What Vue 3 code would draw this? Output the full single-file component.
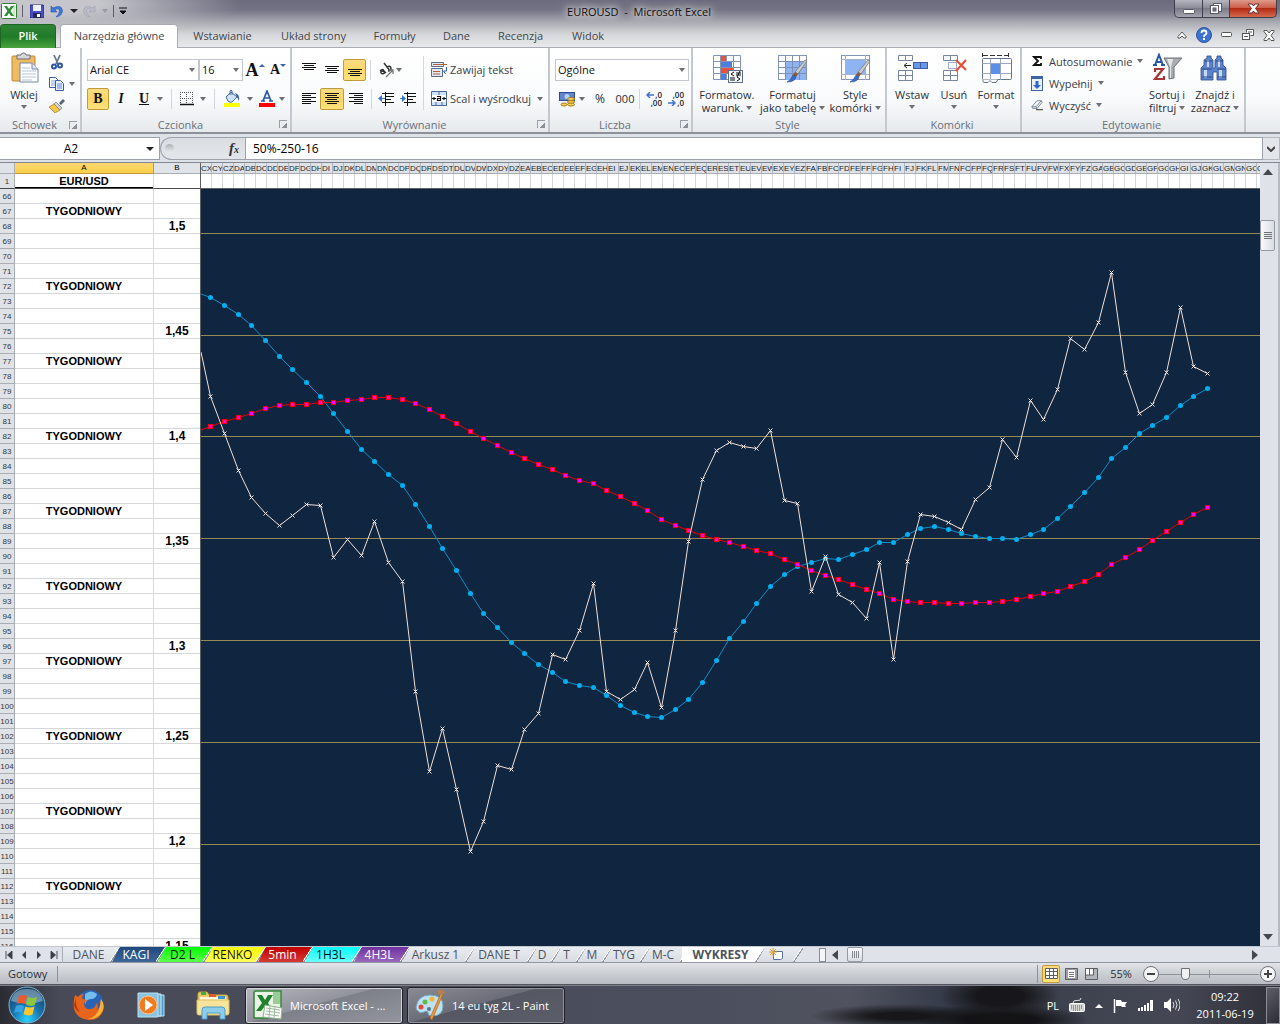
<script setup>
import { ref } from 'vue'

const ribbonTabs = [
  { name: 'Wstawianie', w: 89 },
  { name: 'Układ strony', w: 93 },
  { name: 'Formuły', w: 69 },
  { name: 'Dane', w: 55 },
  { name: 'Recenzja', w: 73 },
  { name: 'Widok', w: 62 },
]

// Column letters CX, CY, … in spreadsheet notation
function columnName(n) {
  let s = ''
  while (n > 0) {
    const r = (n - 1) % 26
    s = String.fromCharCode(65 + r) + s
    n = Math.floor((n - 1) / 26)
  }
  return s
}
const columns = Array.from({ length: 97 }, (_, i) => columnName(102 + i))

const levels = { 68: '1,5', 75: '1,45', 82: '1,4', 89: '1,35', 96: '1,3', 102: '1,25', 109: '1,2', 116: '1,15' }
const rows = Array.from({ length: 51 }, (_, i) => {
  const n = 66 + i
  return { n, a: n % 5 === 2 ? 'TYGODNIOWY' : '', b: levels[n] || '' }
})

// Chart series, y in window pixels
const slow = [
  426, 421, 417, 413, 408, 405, 404, 404, 402, 402, 400, 399, 397, 397, 399, 403, 409, 416, 423, 431, 438, 445, 452, 458,
  464, 469, 475, 480, 483, 490, 496, 503, 510, 519, 525, 530, 535, 539, 542, 546, 550, 553, 559, 564, 570, 575, 579, 584,
  589, 593, 599, 601, 602, 602, 603, 603, 602, 602, 601, 599, 596, 593, 591, 586, 581, 574, 564, 557, 549, 540, 531, 522,
  514, 507,
]
const fast = [
  297, 305, 314, 325, 340, 356, 369, 382, 396, 413, 431, 449, 461, 474, 485, 504, 526, 548, 570, 593, 613, 627, 642, 653,
  664, 672, 681, 685, 687, 695, 705, 712, 716, 717, 709, 699, 682, 660, 638, 621, 603, 586, 574, 566, 562, 558, 559, 554,
  549, 542, 542, 534, 528, 526, 529, 533, 536, 538, 538, 539, 534, 529, 518, 506, 492, 477, 458, 447, 433, 425, 417, 405,
  396, 388,
]
const price = [
  396, 433, 470, 497, 513, 525, 515, 504, 505, 557, 539, 555, 521, 562, 581, 691, 771, 728, 789, 851, 821, 765, 769, 729,
  713, 654, 659, 630, 583, 691, 699, 689, 662, 707, 630, 541, 479, 450, 442, 446, 448, 430, 500, 503, 591, 556, 594, 602,
  618, 562, 659, 561, 514, 516, 522, 529, 499, 487, 439, 457, 400, 419, 389, 338, 349, 322, 272, 372, 413, 404, 372, 307,
  366, 373,
]
const toPoints = (ys) => ys.map((y, i) => ({ x: Math.floor(9.88 + i * 13.652) + 0.5, y: y - 189 + 0.5 }))
const toLine = (pts, startY) => `0,${startY - 189} ` + pts.map((p) => `${p.x},${p.y}`).join(' ')
const slowPts = toPoints(slow)
const fastPts = toPoints(fast)
const pricePts = toPoints(price)
const gridLines = [233, 335, 436, 538, 640, 742, 844].map((y) => y - 189 + 0.5)

const sheets = [
  { name: 'DANE', w: 49, first: true },
  { name: 'KAGI', w: 46, bg: 'navy' },
  { name: 'D2 L', w: 47, bg: 'green' },
  { name: 'RENKO', w: 53, bg: 'yellow' },
  { name: '5min', w: 47, bg: 'red' },
  { name: '1H3L', w: 49, bg: 'cyan' },
  { name: '4H3L', w: 48, bg: 'violet' },
  { name: 'Arkusz 1', w: 65 },
  { name: 'DANE T', w: 62 },
  { name: 'D', w: 24 },
  { name: 'T', w: 25 },
  { name: 'M', w: 26 },
  { name: 'TYG', w: 38 },
  { name: 'M-C', w: 40 },
]

const formula = ref('50%-250-16')
const zoom = ref(55)
</script>

<template>
  <div class="window">
    <header class="top">
      <div class="titlebar">
        <div class="quick">
          <svg width="16" height="16" viewBox="0 0 16 16">
            <rect x=".5" y=".5" width="15" height="15" rx="1" fill="#fff" stroke="#2f7d32" />
            <path d="M12 2h2.500v12H12" fill="#cfe6c9" />
            <path d="M3 3h3l2 3 2-3h3l-3.500 5L13 13h-3L8 10l-2 3H3l3.500-5z" fill="#2e8b37" />
          </svg>
          <i class="vline"></i>
          <button aria-label="Zapisz">
            <svg width="14" height="14" viewBox="0 0 14 14">
              <path d="M0 1h13l1 1v12H1l-1-1z" fill="#4a4fc4" stroke="#2c2f86" />
              <rect x="3" y="1" width="8" height="6" fill="#eef2fb" />
              <rect x="3" y="9" width="8" height="5" fill="#23285e" />
              <rect x="7" y="10" width="3" height="3" fill="#fff" />
            </svg>
          </button>
          <button class="undo" aria-label="Cofnij">
            <svg width="14" height="14" viewBox="0 0 14 14">
              <path d="M1 2v6h6L5 6Q9 3 9.500 7q0 3-3.500 6 6-1 6.500-6Q12 0 3 4z" fill="#3f79d6" stroke="#2a56a6" stroke-width=".6" />
            </svg>
            <i class="caret dark"></i>
          </button>
          <button class="redo" aria-label="Ponów">
            <svg width="14" height="14" viewBox="0 0 14 14">
              <path d="M13 2v6H7l2-2Q5 3 4.500 7q0 3 3.500 6-6-1-6.500-6Q2 0 11 4z" fill="#b9bcc6" stroke="#9b9fab" stroke-width=".6" />
            </svg>
            <i class="caret light"></i>
          </button>
          <i class="vline"></i>
          <svg width="8" height="8" viewBox="0 0 8 8"><path d="M0 1h8M1 4h6L4 7z" stroke="#111" fill="#111" /></svg>
        </div>
        <h1>EUROUSD&nbsp; -&nbsp; Microsoft Excel</h1>
        <div class="winbtns">
          <button class="wb" aria-label="Minimalizuj">
            <svg width="27" height="16"><rect x="8.500" y="8.500" width="11" height="4" rx="1" fill="#fff" stroke="#555865" /></svg>
          </button>
          <button class="wb" aria-label="Przywróć">
            <svg width="26" height="16">
              <rect x="10.500" y="2.500" width="8" height="8" fill="#fff" stroke="#555865" />
              <rect x="7.500" y="4.500" width="8" height="8" fill="#fff" stroke="#555865" />
              <rect x="10" y="7" width="3" height="3" fill="#777b88" stroke="#555865" />
            </svg>
          </button>
          <button class="wb close" aria-label="Zamknij">
            <svg width="46" height="16"><path d="M18 3h4l1.500 2L25 3h4l-3.500 4.500L29 12h-4l-1.500-2-1.500 2h-4l3.500-4.500z" fill="#fff" stroke="#6b3030" /></svg>
          </button>
        </div>
      </div>
      <nav class="tabs">
        <button class="file">Plik</button>
        <button class="tab active">Narzędzia główne</button>
        <button v-for="t in ribbonTabs" :key="t.name" class="tab" :style="{ width: t.w + 'px' }">{{ t.name }}</button>
        <span class="spacer"></span>
        <div class="docbtns">
          <svg width="10" height="8" viewBox="0 0 10 8"><path d="M1 5.500L5 1l4 4.500V7H7L5 5 3 7H1z" fill="#fff" stroke="#555" /></svg>
          <svg width="16" height="16" viewBox="0 0 16 16">
            <circle cx="8" cy="8" r="7.500" fill="#3c74cf" stroke="#2b559d" />
            <path d="M5.500 6q0-2.500 2.500-2.500T10.500 6q0 1-1.300 1.800T8 10" fill="none" stroke="#fff" stroke-width="1.800" />
            <rect x="7" y="11" width="2" height="2" fill="#fff" />
          </svg>
          <svg width="12" height="6" viewBox="0 0 12 6"><rect x=".5" y=".5" width="10" height="4" rx="1" fill="#fff" stroke="#555" /></svg>
          <svg width="12" height="12" viewBox="0 0 12 12">
            <path d="M4.500 3.500v-3h7v6h-3M6 3h4" fill="#fff" stroke="#555" />
            <rect x=".5" y="4.500" width="7" height="6" fill="#fff" stroke="#555" /><path d="M2 7.500h4" stroke="#555" />
          </svg>
          <svg width="12" height="11" viewBox="0 0 12 11"><path d="M1 .5h3l2 2.500L8 .5h3v1L8 5.500l3 4v1H8L6 8l-2 2.500H1v-1l3-4-3-4z" fill="#fff" stroke="#555" /></svg>
        </div>
      </nav>
    </header>

    <section class="ribbon">
      <div class="group g-clip">
        <div class="body">
          <button class="big w48">
            <svg width="32" height="32" viewBox="0 0 32 32">
              <rect x="4" y="4" width="23" height="25" rx="1" fill="#eebb63" stroke="#b9873a" />
              <path d="M9 7V3h4q0-2 2.500-2T18 3h4v4z" fill="#d4d6d8" stroke="#6d6f72" />
              <path d="M12 11h12l6 6v13H12z" fill="#fff" stroke="#7487a3" />
              <path d="M24 11v6h6" fill="#dfe9f7" stroke="#7487a3" />
              <path d="M14 16h8M14 19h14M14 22h14M14 25h14M14 28h10" stroke="#b3c3da" />
            </svg>
            <span>Wklej</span>
            <i class="caret"></i>
          </button>
          <div class="stack clipstack">
            <button aria-label="Wytnij">
              <svg width="14" height="16" viewBox="0 0 14 16">
                <path d="M5 1l4 9M11 1L7 10" stroke="#6f7889" stroke-width="1.800" />
                <circle cx="5" cy="12.500" r="2" fill="none" stroke="#2c55a5" stroke-width="2" /><circle cx="11" cy="11.500" r="2" fill="none" stroke="#2c55a5" stroke-width="2" />
              </svg>
            </button>
            <button aria-label="Kopiuj">
              <svg width="16" height="14" viewBox="0 0 16 14">
                <path d="M.5.5h6l2 2v8h-8z" fill="#fff" stroke="#38609f" /><path d="M2 4h5M2 6h5M2 8h5" stroke="#7fa3dc" />
                <path d="M6.500 3.500h5l3 3v7h-8z" fill="#e7f0fc" stroke="#38609f" /><path d="M8 7h5M8 9h5M8 11h5" stroke="#5f8ad0" />
              </svg>
              <i class="caret"></i>
            </button>
            <button aria-label="Malarz formatów">
              <svg width="16" height="14" viewBox="0 0 16 14">
                <path d="M10 4l4-4 2 2-4 4z" fill="#59646f" /><path d="M7 3l6 6-2 2-6-6z" fill="#cfd3d8" stroke="#777" stroke-width=".7" />
                <path d="M5 5l6 6-5 3-6-6z" fill="#f1c84c" stroke="#9f7823" stroke-width=".7" />
              </svg>
            </button>
          </div>
        </div>
        <footer><span>Schowek</span><i class="launch"></i></footer>
      </div>

      <div class="group g-font">
        <div class="body col">
          <div class="line">
            <label class="combo w112"><select aria-label="Czcionka"><option>Arial CE</option></select><i class="caret"></i></label>
            <label class="combo w44"><select aria-label="Rozmiar"><option>16</option></select><i class="caret"></i></label>
            <button class="glyph grow-a">A<i class="tri up"></i></button>
            <button class="glyph shrink-a">A<i class="tri"></i></button>
          </div>
          <div class="line">
            <button class="glyph on">B</button>
            <button class="glyph w24 ital">I</button>
            <button class="glyph w22 under">U</button>
            <i class="caret"></i>
            <i class="sep m8"></i>
            <svg width="14" height="14" viewBox="0 0 14 14">
              <path d="M.5 0v12M6.500 0v12M12.500 0v12M0 .5h13M0 6.500h13" stroke="#555" stroke-dasharray="1 1" /><path d="M0 12.500h14" stroke="#111" stroke-width="1.500" />
            </svg>
            <i class="caret m6"></i>
            <i class="sep m8"></i>
            <svg width="18" height="17" viewBox="0 0 18 17">
              <path d="M3 7l5-5 6 5-5 5q-2 1-4-1z" fill="#cfe0f5" stroke="#4a6a99" /><path d="M7 5V1q1-2 2 0v4" fill="none" stroke="#4a6a99" />
              <path d="M12 3q5 1 4 8l-2-4z" fill="#2e5ca8" /><rect x="1" y="13" width="16" height="4" fill="#ff0" />
            </svg>
            <i class="caret m6"></i>
            <svg class="ml6" width="16" height="17" viewBox="0 0 16 17">
              <path d="M4 11L8 1l4 10M5 8h6M2 11h4M10 11h4" fill="none" stroke="#2f56a0" stroke-width="1.700" /><rect y="13" width="16" height="4" fill="#f00" />
            </svg>
            <i class="caret m4"></i>
          </div>
        </div>
        <footer><span>Czcionka</span><i class="launch"></i></footer>
      </div>

      <div class="group g-align">
        <div class="body">
          <div class="body col nopad">
            <div class="line">
              <button class="al high"><svg width="14" height="8"><path d="M0 .5h14M2 2.500h10M0 4.500h14M2 6.500h10" stroke="#111" /></svg></button>
              <button class="al"><svg width="14" height="8"><path d="M0 .5h14M2 2.500h10M0 4.500h14M2 6.500h10" stroke="#111" /></svg></button>
              <button class="al on low"><svg width="14" height="8"><path d="M0 .5h14M2 2.500h10M0 4.500h14M2 6.500h10" stroke="#111" /></svg></button>
              <i class="sep m4"></i>
              <svg class="ml8" width="17" height="16" viewBox="0 0 17 16">
                <path d="M1 9q3-3 4 0l2 2M5 9q-4 0-3 2 2 2 4-1M5 1l6 8M8 5q3-2 4 1 0 3-3 3" fill="none" stroke="#333" stroke-width="1.500" />
                <path d="M7 15l7-7M10 8h4v4" fill="none" stroke="#777" stroke-width="1.300" />
              </svg>
              <i class="caret"></i>
            </div>
            <div class="line">
              <button class="al"><svg width="14" height="12"><path d="M0 .5h14M0 2.500h9M0 4.500h14M0 6.500h9M0 8.500h14M0 10.500h9" stroke="#111" /></svg></button>
              <button class="al on wide"><svg width="14" height="12"><path d="M0 .5h14M2 2.500h10M0 4.500h14M2 6.500h10M0 8.500h14M2 10.500h10" stroke="#111" /></svg></button>
              <button class="al"><svg width="14" height="12"><path d="M0 .5h14M5 2.500h9M0 4.500h14M5 6.500h9M0 8.500h14M5 10.500h9" stroke="#111" /></svg></button>
              <i class="sep m4"></i>
              <svg class="ml6" width="16" height="14" viewBox="0 0 16 14">
                <path d="M4 1.500h12M8 4.500h8M8 7.500h5M4 10.500h12M7.500 0v14" stroke="#111" /><path d="M7 7H4v3L0 6.500 4 3v3h3" fill="#3b74cf" />
              </svg>
              <svg class="ml6" width="16" height="14" viewBox="0 0 16 14">
                <path d="M4 1.500h12M8 4.500h8M8 7.500h5M4 10.500h12M7.500 0v14" stroke="#111" /><path d="M0 6h2V3l4 3.500L2 10V7H0" fill="#3b74cf" />
              </svg>
            </div>
          </div>
          <i class="sep tall"></i>
          <div class="body col nopad">
            <button class="line text">
              <svg width="16" height="16" viewBox="0 0 16 16">
                <path d="M.5.500h12v4H.5zM.5 6.500h11v8H.5z" fill="#dfe9f6" stroke="#5b6d8a" /><path d="M2 2.500h14M2 9.500h7M2 12h7" stroke="#b9602c" /><path d="M15.500 5v4h-3l2 3" fill="none" stroke="#2b5fb5" />
              </svg>
              Zawijaj tekst
            </button>
            <button class="line text">
              <svg width="16" height="15" viewBox="0 0 16 15">
                <path d="M.5.500h15v14H.5zM0 4.500h16M0 10.500h16M8 0v4M5 11v4M11 11v4" fill="#cfe0f7" stroke="#4a6a99" /><rect x="1" y="4" width="14" height="7" fill="#fff" />
                <path d="M6 5.500h3.500v4H6.500v-2h3M1 7.500h4M11 7.500h4M3 6v3M13 6v3" fill="none" stroke="#111" stroke-width="1.200" />
              </svg>
              Scal i wyśrodkuj <i class="caret push"></i>
            </button>
          </div>
        </div>
        <footer><span>Wyrównanie</span><i class="launch"></i></footer>
      </div>

      <div class="group g-num">
        <div class="body col">
          <div class="line"><label class="combo w134"><select aria-label="Format liczb"><option>Ogólne</option></select><i class="caret"></i></label></div>
          <div class="line">
            <svg class="ml4" width="16" height="16" viewBox="0 0 16 16">
              <rect x=".5" y="1.500" width="15" height="8" fill="#5d86cf" stroke="#2b4e93" /><circle cx="8" cy="5.500" r="2.500" fill="#b9d0f2" />
              <ellipse cx="12" cy="8" rx="3.500" ry="1.500" fill="#f7cf5a" stroke="#a97b19" /><ellipse cx="12" cy="11" rx="3.500" ry="1.500" fill="#f7cf5a" stroke="#a97b19" /><ellipse cx="12" cy="13.500" rx="3.500" ry="1.500" fill="#f7cf5a" stroke="#a97b19" /><ellipse cx="5" cy="13.500" rx="3" ry="1.500" fill="#f7cf5a" stroke="#a97b19" />
            </svg>
            <i class="caret m4"></i>
            <button class="num pc">%</button>
            <button class="num th">000</button>
            <i class="sep"></i>
            <button class="dec" aria-label="Zwiększ dziesiętne">
              <span><svg width="8" height="6"><path d="M8 3H2M4 0L1 3l3 3" fill="none" stroke="#3b74cf" stroke-width="1.500" /></svg>,0</span>
              <span>,00</span>
            </button>
            <button class="dec" aria-label="Zmniejsz dziesiętne">
              <span>,00</span>
              <span><svg width="8" height="6"><path d="M0 3h6M4 0l3 3-3 3" fill="none" stroke="#3b74cf" stroke-width="1.500" /></svg>,0</span>
            </button>
          </div>
        </div>
        <footer><span>Liczba</span><i class="launch"></i></footer>
      </div>

      <div class="group g-style">
        <div class="body">
          <button class="big w66">
            <svg width="32" height="32" viewBox="0 0 32 32">
              <path d="M2.500 3.500h27v24h-27zM9.500 3v25M15.500 3v25M22.500 3v25M2 9.500h28M2 15.500h28M2 21.500h28" fill="#fff" stroke="#8494b5" />
              <rect x="10" y="4" width="5" height="5" fill="#e8503f" /><rect x="10" y="10" width="11" height="5" fill="#4a7fe0" /><rect x="10" y="16" width="12" height="5" fill="#e8503f" /><rect x="10" y="22" width="5" height="6" fill="#4a7fe0" />
              <rect x="17.500" y="18.500" width="14" height="12" fill="#f4f6fa" stroke="#5f6e8a" /><path d="M23 20l-3 2 3 2M19 26h5M19 28h5M25 21h5M25 23h5M29 19l-3 6M26 25l3 2-3 2" fill="none" stroke="#111" />
            </svg>
            <span>Formatow.</span><span>warunk. <i class="caret"></i></span>
          </button>
          <button class="big w66">
            <svg width="32" height="32" viewBox="0 0 32 32">
              <rect x="2.500" y="3.500" width="28" height="24" fill="#fff" stroke="#8494b5" /><path d="M10 10h20v18H10z" fill="#8fb4f4" />
              <path d="M9.500 3v25M16.500 3v25M23.500 3v25M2 9.500h28M2 15.500h28M2 21.500h28" stroke="#7c8fb5" />
              <path d="M31 9l-9 13-3-2L29 8z" fill="#c9cbcd" stroke="#6b6b6b" stroke-width=".7" /><path d="M19 20l3 2-2 3-3-2z" fill="#8a5a2c" /><path d="M17 23l3 2q-1 5-9 5 4-2 6-7z" fill="#3a6cc8" stroke="#274a8c" stroke-width=".6" />
            </svg>
            <span>Formatuj</span><span>jako tabelę <i class="caret"></i></span>
          </button>
          <button class="big w60">
            <svg width="32" height="32" viewBox="0 0 32 32">
              <rect x="2.500" y="3.500" width="28" height="24" fill="#fff" stroke="#8494b5" /><rect x="7" y="8" width="19" height="14" fill="#8fb4f4" />
              <path d="M6.500 3v25M26.500 3v25M2 7.500h28M2 22.500h28" stroke="#a4b1cb" />
              <path d="M31 9l-9 13-3-2L29 8z" fill="#c9cbcd" stroke="#6b6b6b" stroke-width=".7" /><path d="M19 20l3 2-2 3-3-2z" fill="#8a5a2c" /><path d="M17 23l3 2q-1 5-9 5 4-2 6-7z" fill="#3a6cc8" stroke="#274a8c" stroke-width=".6" />
            </svg>
            <span>Style</span><span>komórki <i class="caret"></i></span>
          </button>
        </div>
        <footer><span>Style</span></footer>
      </div>

      <div class="group g-cells">
        <div class="body">
          <button class="big w42">
            <svg width="32" height="32" viewBox="0 0 32 32">
              <path d="M2.500 3.500h14v5h-14zM9.500 3v6M2.500 18.500h14v10h-14zM9.500 18v10M2 23.500h15" fill="#fff" stroke="#7886a1" />
              <rect x="17.500" y="10.500" width="14" height="6" fill="#6a97ea" stroke="#3d5f9f" /><path d="M24.500 10v7" stroke="#3d5f9f" /><path d="M15 13.500H9M11 11l-3 2.500 3 2.500" fill="none" stroke="#222" />
            </svg>
            <span>Wstaw</span><i class="caret"></i>
          </button>
          <button class="big w42">
            <svg width="32" height="32" viewBox="0 0 32 32">
              <path d="M5.500 3.500h14v5h-14zM12.500 3v6M5.500 18.500h14v10h-14zM12.500 18v10M5 23.500h15" fill="#fff" stroke="#7886a1" />
              <rect x="10.500" y="10.500" width="8" height="6" fill="none" stroke="#3d5fa5" stroke-dasharray="1 1" /><path d="M18 8l10 10M28 8L18 19" stroke="#ee4b33" stroke-width="2" />
            </svg>
            <span>Usuń</span><i class="caret"></i>
          </button>
          <button class="big w42">
            <svg width="32" height="32" viewBox="0 0 32 32">
              <path d="M3 3.500h26" stroke="#333" stroke-dasharray="5 2" /><path d="M2.500 1v4M28.500 1v4" stroke="#333" />
              <rect x="2.500" y="6.500" width="29" height="21" rx="1" fill="#fff" stroke="#66758f" /><path d="M10.500 7v21M20.500 7v21M2 11.500h29M2 21.500h29" stroke="#9aa8c1" />
              <rect x="11" y="12" width="9" height="10" fill="#5c8fe8" /><path d="M3 27.500v2q0 1 2 1h3l2-2 2 2h4l2-3" fill="#fff" stroke="#66758f" />
            </svg>
            <span>Format</span><i class="caret"></i>
          </button>
        </div>
        <footer><span>Komórki</span></footer>
      </div>

      <div class="group g-edit">
        <div class="body">
          <div class="stack edit">
            <button class="text">
              <svg width="12" height="12" viewBox="0 0 12 12"><path d="M10 4V2H3l4 4-4 4h7V8" fill="none" stroke="#111" stroke-width="1.800" /></svg>
              Autosumowanie <i class="caret"></i>
            </button>
            <button class="text">
              <svg width="12" height="15" viewBox="0 0 12 15"><rect x=".5" y=".5" width="11" height="14" fill="#eaf1fb" stroke="#3e64a4" /><path d="M.5 2h11" stroke="#3e64a4" stroke-width="2" /><path d="M4.500 5h3v4h2.500L6 13 2 9h2.500z" fill="#2c66cc" /></svg>
              Wypełnij <i class="caret"></i>
            </button>
            <button class="text">
              <svg width="12" height="12" viewBox="0 0 14 12"><path d="M1 8l6-7h5l1 2-6 7H2z" fill="#f3f5f9" stroke="#6d7a92" /><path d="M1 8l5 0 6-7M6 8l1 3" fill="none" stroke="#6d7a92" /><path d="M6 11.500h8" stroke="#111" /></svg>
              Wyczyść <i class="caret"></i>
            </button>
          </div>
          <button class="big w48">
            <svg width="32" height="32" viewBox="0 0 32 32">
              <path d="M13 6h18l-8 9v11l-5 1V15z" fill="#a9adb2" stroke="#6d7074" /><path d="M16 7h6l-2 8v11h-1V15z" fill="#e4e6e8" />
              <path d="M4 13L8 3l4 10M5 10h6M2 13h4M10 13h4" fill="none" stroke="#2c55a5" stroke-width="2" />
              <path d="M4 20v-3h8L4 27h9v-3" fill="none" stroke="#a33636" stroke-width="2.200" />
            </svg>
            <span>Sortuj i</span><span>filtruj <i class="caret"></i></span>
          </button>
          <button class="big w48">
            <svg width="32" height="32" viewBox="0 0 32 32">
              <path d="M8 4h4v2l2 2v8h2V8l2-2V4h4v2l2 2v5l3 3v12h-9v-8h-4v8H2V16l3-3V8l3-2z" fill="#5b84cc" stroke="#2c4a85" stroke-width=".8" />
              <path d="M8 8h2v7H8zM19 8h2v7h-2zM5 18h3v8H5zM20 18h3v8h-3z" fill="#c6d8f5" /><path d="M3 17h10M18 17h9M3 25h10M18 25h9M6 9h7M17 9h7" stroke="#2c4a85" />
            </svg>
            <span>Znajdź i</span><span>zaznacz <i class="caret"></i></span>
          </button>
        </div>
        <footer><span>Edytowanie</span></footer>
      </div>
    </section>

    <section class="formulabar">
      <div class="namebox"><input aria-label="Pole nazwy" value="A2" /><i class="caret dark"></i></div>
      <div class="fx">
        <i class="knob"></i>
        <span class="fxlabel">f<small>x</small></span>
      </div>
      <input v-model="formula" class="formula" aria-label="Pasek formuły" />
      <button class="expand" aria-label="Rozwiń"><svg width="8" height="6"><path d="M0 1l4 4 4-4" fill="none" stroke="#444" stroke-width="2" /></svg></button>
    </section>

    <main class="grid">
      <table class="cells">
        <thead>
          <tr class="letters"><th class="rn"></th><th class="ca sel">A</th><th class="cb">B</th></tr>
        </thead>
        <tbody>
          <tr class="frozen"><th class="rn">1</th><td class="ca">EUR/USD</td><td class="cb"></td></tr>
          <tr v-for="r in rows" :key="r.n"><th class="rn">{{ r.n }}</th><td class="ca">{{ r.a }}</td><td class="cb">{{ r.b }}</td></tr>
        </tbody>
      </table>
      <div class="right">
        <div class="strip heads"><span v-for="c in columns" :key="c">{{ c }}</span></div>
        <div class="strip blanks"><span v-for="c in columns" :key="c"></span></div>
        <svg class="chart" width="100%" height="100%">
          <line v-for="y in gridLines" :key="y" x1="0" x2="100%" :y1="y" :y2="y" stroke="#938953" />
          <polyline :points="toLine(fastPts, 294)" class="fast" />
          <circle v-for="(p, i) in fastPts" :key="i" :cx="p.x" :cy="p.y" r="2.500" fill="#00b0f0" />
          <polyline :points="toLine(slowPts, 430)" class="slow" />
          <g v-for="(p, i) in slowPts" :key="i">
            <rect :x="p.x - 2.5" :y="p.y - 2.5" width="5" height="5" fill="#f00" />
            <rect :x="p.x - 1.5" :y="p.y - 1.5" width="3" height="3" fill="#f0f" />
          </g>
          <polyline :points="toLine(pricePts, 352)" class="price" />
          <path v-for="(p, i) in pricePts" :key="i" :d="`M${p.x - 2} ${p.y - 2}l4 4m0 -4l-4 4`" class="price" />
        </svg>
      </div>
      <div class="vscroll">
        <svg width="10" height="6"><path d="M0 6l5-6 5 6z" fill="#45484d" /></svg>
        <div class="vthumb"><i></i><i></i><i></i><i></i></div>
        <span class="spacer"></span>
        <svg class="down" width="10" height="6"><path d="M0 0l5 6 5-6z" fill="#45484d" /></svg>
      </div>
    </main>

    <nav class="sheetbar">
      <div class="nav">
        <svg width="8" height="8"><path d="M1 0v8M7 0L2.500 4 7 8z" stroke="#3a3f4a" fill="#3a3f4a" stroke-width=".9" /></svg>
        <svg width="8" height="8"><path d="M6 0L2 4l4 4z" fill="#3a3f4a" /></svg>
        <svg width="8" height="8"><path d="M2 0l4 4-4 4z" fill="#3a3f4a" /></svg>
        <svg width="8" height="8"><path d="M7 0v8M1 0l4.500 4L1 8z" stroke="#3a3f4a" fill="#3a3f4a" stroke-width=".9" /></svg>
      </div>
      <button v-for="s in sheets" :key="s.name" class="sheet" :class="[s.bg, { first: s.first }]" :style="{ width: s.w + 'px' }"><span>{{ s.name }}</span></button>
      <button class="sheet current"><span>WYKRESY</span></button>
      <button class="sheet add" aria-label="Wstaw arkusz">
        <span><svg width="16" height="13" viewBox="0 0 16 13"><path d="M4.500 3.500h9v7l-2 1h-7z" fill="#fff" stroke="#56709f" /><path d="M4 0v8M0 4h8M1 1l6 6M7 1L1 7" stroke="#e39a2e" /></svg></span>
      </button>
      <span class="gap"></span>
      <i class="split"></i>
      <svg class="left" width="6" height="10"><path d="M6 0L0 5l6 5z" fill="#45484d" /></svg>
      <div class="hthumb"><i></i><i></i><i></i><i></i></div>
      <span class="spacer"></span>
      <svg width="6" height="10"><path d="M0 0l6 5-6 5z" fill="#45484d" /></svg>
      <i class="corner"></i>
    </nav>

    <footer class="status">
      <span class="ready">Gotowy</span>
      <span class="spacer"></span>
      <div class="views">
        <button class="on" aria-label="Normalny"><svg width="13" height="11"><path d="M.5.500h12v10H.5zM4.500 0v11M8.500 0v11M0 3.500h13M0 7.500h13" fill="#fff" stroke="#5f6065" /></svg></button>
        <button aria-label="Układ strony"><svg width="13" height="12"><path d="M.5.500h12v11H.5z" fill="#9a9da3" stroke="#5f6065" /><rect x="3" y="2" width="7" height="8" fill="#fff" /><path d="M4 4.500h5M4 6.500h5M4 8.500h5" stroke="#777" /></svg></button>
        <button aria-label="Podgląd podziału stron"><svg width="13" height="12"><path d="M.5.500h12v11H.5z" fill="#b2b5ba" stroke="#5f6065" /><path d="M1 1h3v6H1zM5 1h3v6H5z" fill="#fff" /><path d="M4.500 0v7M8.500 0v7H0" fill="none" stroke="#5f6065" /></svg></button>
      </div>
      <span class="pct">{{ zoom }}%</span>
      <button class="round" aria-label="Pomniejsz"><svg width="16" height="16"><circle cx="8" cy="8" r="7.500" fill="#f4f5f6" stroke="#6d7077" /><path d="M4 8h8" stroke="#444" stroke-width="2" /></svg></button>
      <input v-model="zoom" class="slider" type="range" min="10" max="192" aria-label="Powiększenie" />
      <button class="round" aria-label="Powiększ"><svg width="16" height="16"><circle cx="8" cy="8" r="7.500" fill="#f4f5f6" stroke="#6d7077" /><path d="M4 8h8M8 4v8" stroke="#444" stroke-width="2" /></svg></button>
    </footer>

    <footer class="taskbar">
      <svg class="orb" width="38" height="38" viewBox="0 0 38 38">
        <defs>
          <radialGradient id="orb" cx="50%" cy="90%" r="90%"><stop offset="0" stop-color="#27d3ff" /><stop offset=".45" stop-color="#1a73ae" /><stop offset="1" stop-color="#123a5e" /></radialGradient>
        </defs>
        <circle cx="19" cy="19" r="18" fill="url(#orb)" stroke="#86b4cf" />
        <path d="M3 15Q5 3 19 3t16 12Q19 20 3 15z" fill="#fff" opacity=".35" />
        <path d="M11 10q4-2 8 0l-2 8q-4-2-8 0z" fill="#f0592a" /><path d="M20 11q4 2 9 0l-2 8q-5 2-9-.5z" fill="#8cc63e" />
        <path d="M8 20q4-2 8 0l-2 7q-4-2-8 0z" fill="#34a4e4" /><path d="M17.500 20.500q4 2 9 0l-2 8q-5 2-9-.5z" fill="#fdc82f" />
      </svg>
      <svg class="ff" width="32" height="32" viewBox="0 0 32 32">
        <circle cx="17" cy="14" r="13" fill="#2a62b4" /><path d="M12 5q6-5 12 0-1 5-6 5t-6 6z" fill="#74bdec" />
        <path d="M2 6l3 2q2-3 6-3-3 3-1 5l4 1-3 3q0 7 7 6 5-1 5-6 3 2 1 7 4-3 3-10 4 5 3 11-3 9-14 9Q4 30 1 20 0 12 2 6z" fill="#e8641b" />
        <path d="M28 10q5 7 1 13-5 8-14 7 12-2 13-20z" fill="#f9b233" /><path d="M3 9q-1 9 4 14-5-2-6-7z" fill="#b8330f" />
      </svg>
      <svg class="wmp" width="28" height="28" viewBox="0 0 28 28">
        <path d="M9 4h18v21H9z" fill="#4f9bc9" stroke="#bfe2f3" /><path d="M5 3h19v22H5z" fill="#6cb2da" stroke="#cdeaf7" /><path d="M1 2h20v24H1z" fill="#8ac4e2" stroke="#b9e0f2" />
        <circle cx="11" cy="14" r="9" fill="#f27a1f" stroke="#ffc58b" /><path d="M8 8l8 6-8 6z" fill="#fff" />
      </svg>
      <svg class="exp" width="34" height="32" viewBox="0 0 34 32">
        <path d="M2 5q0-2 2-2h7l2 3h17q2 0 2 2v17H2z" fill="#eccb69" stroke="#c9a23e" /><path d="M4 8h26v3H4z" fill="#fff7d5" /><path d="M5 3h5v3H5z" fill="#3fae49" /><path d="M13 5h7v3h-7z" fill="#e05a30" /><path d="M22 7h7v3h-7z" fill="#3a97d3" />
        <path d="M1 11h32v13q0 2-2 2H3q-2 0-2-2z" fill="#f7e49a" stroke="#dcbf62" />
        <path d="M6 30v-9q0-3 3-3h17q3 0 3 3v9h-5v-6H11v6z" fill="#8fcdec" stroke="#4b9cc7" />
      </svg>
      <button class="task active">
        <svg width="32" height="32" viewBox="0 0 32 32">
          <path d="M2 4q0-2 2-2h25v18L15 29H2z" fill="#e9f4e6" stroke="#2b8535" stroke-width="1.500" /><path d="M21 3h7v12h-7z" fill="#9ccc95" />
          <path d="M5 6h5l3 5 3-5h5l-5 8 5 8h-5l-3-5-4 5H4l6-8z" fill="#22812d" />
          <path d="M13 16l17 3-1 11-18-2z" fill="#fff" stroke="#8bb287" /><path d="M14 19l14 2M14 22l14 2M13 25l14 2M18 17l-1 11M23 18l-1 11" stroke="#9ab99a" />
        </svg>
        <span>Microsoft Excel - ...</span>
      </button>
      <button class="task">
        <svg width="32" height="32" viewBox="0 0 32 32">
          <path d="M2 18Q4 6 16 6q13 0 13 11 0 10-11 10-4 0-4-3t-4-1-6-1 q-2-1-2-4z" fill="#bfe0f1" stroke="#6ca7c5" />
          <circle cx="7" cy="18" r="2.500" fill="#e4483a" /><circle cx="11" cy="13" r="2.500" fill="#5dbb46" /><circle cx="18" cy="10" r="2.500" fill="#f3b52f" /><circle cx="15" cy="20" r="2" fill="#4c7893" />
          <path d="M27 4l2 1-11 26-2-2z" fill="#ef9637" stroke="#a75d17" stroke-width=".6" /><path d="M24 1q5-1 7 3l-3 2-4-1z" fill="#b78052" />
        </svg>
        <span>14 eu tyg 2L - Paint</span>
      </button>
      <span class="spacer"></span>
      <div class="tray">
        <span class="lang">PL</span>
        <svg width="16" height="15" viewBox="0 0 16 15"><path d="M4 5q0-3 4-2.500T12 0" fill="none" stroke="#ddd" /><rect x=".5" y="5.500" width="15" height="8" rx="1" fill="#d7d7d7" stroke="#fff" /><path d="M2 8h12M2 10h12M4 12h8" stroke="#555" stroke-dasharray="1 1" /></svg>
        <svg width="8" height="5"><path d="M0 5l4-4 4 4z" fill="#fff" /></svg>
        <svg width="15" height="15" viewBox="0 0 15 15"><path d="M1.500 1v14" stroke="#fff" stroke-width="1.500" /><path d="M3 2h5l1 2h5l-2 3 1 2H9L8 8H3z" fill="#fff" /></svg>
        <svg width="16" height="12" viewBox="0 0 16 12"><path d="M0 9h2v3H0zM3 8h2v4H3zM6 6h2v6H6zM9 4h2v8H9zM12 1h3v11h-3z" fill="#fff" /></svg>
        <svg width="16" height="14" viewBox="0 0 16 14"><path d="M0 4h3l4-4v14l-4-4H0z" fill="#fff" /><path d="M9 4q2 3 0 6M11.500 2.500q3 4.500 0 9M14 1q4 6 0 12" fill="none" stroke="#ddd" /></svg>
      </div>
      <div class="clock"><span>09:22</span><span>2011-06-19</span></div>
      <i class="desk"></i>
    </footer>
  </div>
</template>

<style>
body { background: #cfd4db; }
</style>

<style scoped>
* { box-sizing: border-box; }
.window { height: 100vh; min-width: 1280px; display: flex; flex-direction: column; overflow: hidden; font: 11px/13px "Open Sans", "Noto Sans", sans-serif; color: #2b2f36; background: #d5dae2; }
button { border: 0; padding: 0; margin: 0; background: none; font: inherit; color: inherit; }
svg { display: block; flex: none; }
i { flex: none; font-style: normal; }
.spacer { flex: 1; }
.caret { display: inline-block; width: 0; height: 0; border: 3px solid transparent; border-top: 4px solid #6c6f75; border-bottom: 0; vertical-align: 2px; }
.caret.dark { border-width: 4px 4px 0; border-top-color: #222; }
.caret.light { border-top-color: #9799a3; }

.top { height: 48px; flex: none; background: radial-gradient(ellipse 200px 36px at 40px 4px, #c5c5cb 30%, transparent), linear-gradient(#6b6b7e 0, #747485 10px, #a9a9b2 22px, #d5d6d9 34px, #e9ebeb 48px); border-bottom: 1px solid #a9adb3; }
.titlebar { display: flex; height: 24px; align-items: flex-start; }
.quick { flex: 1 1 0; display: flex; align-items: center; height: 22px; padding-left: 1px; gap: 4px; }
.quick button { display: flex; align-items: center; gap: 6px; }
.quick > button:first-of-type { margin: 0 2px; }
.vline { width: 1px; height: 12px; background: #5d5d66; margin: 0 1px; }
h1 { margin: 0; font-size: 11px; line-height: 24px; font-weight: 400; color: #111; text-shadow: 0 0 6px #fff, 0 0 8px #ddd, 0 0 12px #ccc; }
.winbtns { flex: 1 1 0; display: flex; justify-content: flex-end; padding-right: 3px; }
.wb { height: 18px; border: 1px solid #3f3f4c; border-top: 0; background: linear-gradient(#b5b5c0, #8d8d9a 45%, #7a7a88 50%, #a5a5b0); margin-left: -1px; }
.wb:first-child { border-radius: 0 0 0 5px; }
.wb.close { border-radius: 0 0 5px 0; background: linear-gradient(#dd9a8b, #cc5e4a 45%, #b42b14 50%, #d46a4e); }
.tabs { display: flex; height: 24px; }
.file { width: 56px; color: #fff; font-weight: 600; background: linear-gradient(#2f8436, #1f7a28 50%, #49a33d); border: 1px solid #1c6522; border-bottom: 0; border-radius: 4px 4px 0 0; margin-right: 4px; padding-bottom: 2px; }
.tab { color: #43474d; line-height: 24px; }
.tab.active { width: 118px; background: #fff; border: 1px solid #a9adb3; border-bottom: 0; border-radius: 4px 4px 0 0; line-height: 21px; padding-bottom: 2px; }
.docbtns { display: flex; align-items: center; gap: 9px; padding: 0 5px 2px 0; }

.ribbon { display: flex; flex: none; height: 86px; background: linear-gradient(#fff, #fafbfc 60%, #e6e9ed); border-bottom: 2px solid #8d929a; }
.group { display: flex; flex-direction: column; border-right: 2px solid #c3c8cf; }
.g-clip { width: 82px; } .g-font { width: 210px; } .g-align { width: 258px; } .g-num { width: 143px; }
.g-style { width: 194px; } .g-cells { width: 135px; } .g-edit { width: 224px; }
.group > .body { flex: 1; }
.body { display: flex; }
.body.col { flex-direction: column; gap: 6px; padding: 10px 0 0 5px; }
.body.col.nopad { padding-left: 0; }
.g-align > .body { padding-left: 5px; }
.group > footer { display: flex; align-items: center; height: 16px; color: #6a7079; padding-right: 3px; }
.group > footer span { flex: 1; text-align: center; }
.launch { width: 8px; height: 8px; border: solid #9a9ea6; border-width: 1px 0 0 1px; background: linear-gradient(135deg, transparent 60%, #8b8f97 60%); }
.line { display: flex; align-items: center; height: 23px; }
.big { display: flex; flex-direction: column; align-items: center; padding-top: 4px; white-space: nowrap; height: 68px; }
.big svg { margin-bottom: 4px; }
.big > .caret { margin-top: 4px; }
.w48 { width: 48px; } .w66 { width: 66px; } .w60 { width: 60px; } .w42 { width: 42px; }
.g-style .body { padding-left: 1px; }
.g-cells .body { padding-left: 4px; }
.stack { display: flex; flex-direction: column; }
.clipstack { padding: 3px 0 0 1px; }
.clipstack button { display: flex; align-items: center; gap: 4px; height: 22px; }
.text { gap: 3px; color: #3b4048; }
.push { margin-left: 3px; }
.edit { width: 121px; padding: 2px 0 0 9px; }
.edit .text { display: flex; align-items: center; height: 22px; gap: 5px; }
.edit .text svg { margin-right: 1px; }
.combo { display: grid; align-items: center; height: 22px; }
.combo select { grid-area: 1 / 1; appearance: none; width: 100%; height: 22px; border: 1px solid #c3c7cd; border-radius: 0; background: #fff; font: 11px/18px "Open Sans", sans-serif; color: #111; padding: 0 2px; }
.combo .caret { grid-area: 1 / 1; justify-self: end; margin-right: 4px; }
.w112 { width: 112px; } .w44 { width: 44px; } .w134 { width: 134px; }
.glyph { display: flex; align-items: center; justify-content: center; font: bold 14px/20px "Liberation Serif", serif; color: #111; height: 22px; width: 22px; }
.glyph.w24 { width: 24px; } .glyph.w22 { width: 22px; margin-right: 2px; }
.glyph.ital { font-style: italic; } .under { text-decoration: underline; }
.glyph.grow-a { font-size: 18px; width: 24px; } .shrink-a { font-size: 14px; }
.tri { border: 3px solid transparent; border-top: 3px solid #3b62ae; border-bottom: 0; align-self: flex-start; margin-top: 5px; }
.tri.up { border-top: 0; border-bottom: 3px solid #3b62ae; }
.on { border: 1px solid #c29a37; border-radius: 2px; background: linear-gradient(#fbdc85, #fdd664 50%, #ffe27d); }
.sep { width: 1px; height: 20px; background: #d3d6db; }
.m8 { margin: 0 8px; } .m6 { margin-left: 6px; } .m4 { margin-left: 4px; } .ml8 { margin-left: 8px; } .ml6 { margin-left: 6px; } .ml4 { margin-left: 4px; }
.al { display: flex; justify-content: center; align-items: center; width: 23px; height: 22px; }
.al.high { padding-bottom: 6px; }
.al.low { align-items: flex-end; padding-bottom: 3px; }
.al.wide { width: 24px; }
.sep.tall { height: 54px; margin: 8px 7px 0 auto; }
.g-align > .body > .body.col:last-child { width: 117px; }
.num { text-align: center; font-size: 11px; } .num.pc { width: 30px; font-size: 12px; } .num.th { width: 20px; margin-right: 4px; }
.dec { display: flex; flex-direction: column; align-items: flex-end; width: 22px; font: 600 8px/8px "Open Sans", sans-serif; color: #222; }
.dec span { display: flex; align-items: center; gap: 1px; }

.formulabar { display: flex; flex: none; height: 28px; padding: 3px 0 2px; background: #dde2e9; }
.namebox { display: flex; align-items: center; width: 160px; background: #fff; border: 1px solid #9da2aa; border-left: 0; }
.namebox input { width: 142px; border: 0; background: none; text-align: center; font: 12px/20px "Open Sans", sans-serif; }
.namebox .caret { margin-left: 4px; }
.fx { display: flex; align-items: center; justify-content: space-between; width: 85px; padding: 0 6px 0 4px; border: 1px solid #9da2aa; border-right: 0; border-radius: 12px 0 0 12px; background: linear-gradient(#d9dce1, #e3e6ea); }
.knob { width: 9px; height: 9px; border-radius: 50%; background: linear-gradient(#aeb1b6, #eceef0); }
.fxlabel { font: italic bold 15px/18px "Liberation Serif", serif; color: #333; }
.fxlabel small { font-size: 10px; }
.formula { flex: 1; min-width: 0; border: 1px solid #9da2aa; padding: 0 7px; font: 12px/20px "Open Sans", sans-serif; background: #fff; }
.expand { display: flex; align-items: center; justify-content: center; width: 17px; border: 1px solid #b5b9c0; border-left: 0; background: #e3e6ea; }

.grid { display: flex; flex: 1; min-height: 0; overflow: hidden; border-top: 1px solid #82868e; background: #fff; }
.cells { width: 201px; flex: none; align-self: flex-start; table-layout: fixed; border-collapse: separate; border-spacing: 0; font: bold 12px/14px "Liberation Sans", sans-serif; color: #000; border-right: 1px solid #5e5e5e; }
.cells th, .cells td { padding: 0; height: 15px; text-align: center; border: solid #d5d7da; border-width: 0 1px 1px 0; }
.cells td { font-size: 12px; line-height: 13px; padding-top: 1px; }
.cells td.ca { font-size: 11px; }
.cells .rn { width: 15px; padding-top: 2px; font: 8px/12px "Liberation Sans", sans-serif; color: #33373d; background: #dfe2e6; border-color: #a9adb4; }
.cells .ca { width: 139px; } .cells .cb { width: 46px; border-right: 0; }
.cells .letters th { height: 11px; padding: 0; font: 8px/10px "Liberation Sans", sans-serif; background: #dfe2e6; border-color: #a9adb4; }
.cells .letters .sel { background: linear-gradient(#fcd771, #fcd04b); border-color: #c29a37; }
.cells .frozen td, .cells .frozen th { border-bottom-color: #4a4a4a; }
.cells .frozen .ca { box-shadow: inset 0 -1px #000; font-size: 11px; }
.right { flex: 1; min-width: 0; display: flex; flex-direction: column; overflow: hidden; }
.strip { display: flex; flex: none; overflow: hidden; font: 8px/11px "Liberation Sans", sans-serif; color: #22262c; }
.strip span { flex: none; width: 11px; overflow: hidden; border-right: 1px solid #b3b7be; }
.heads { height: 11px; background: #dfe2e6; border-bottom: 1px solid #a9adb4; }
.blanks { height: 15px; background: #fff; border-bottom: 1px solid #5e5e5e; }
.blanks span { border-color: #d5d7da; }
.chart { flex: 1; min-height: 0; background: #10253f; }
.chart polyline, .chart path { fill: none; stroke-width: 1; }
.fast { stroke: #0e8fca; } .slow { stroke: #e60004; } .price { stroke: #f0e0da; }
.vscroll { display: flex; flex-direction: column; align-items: center; width: 20px; flex: none; padding: 6px 3px 6px 0; background: #dfe3e9; border-right: 2px solid #b6bac1; }
.vthumb { display: flex; flex-direction: column; align-items: center; justify-content: center; gap: 1px; width: 15px; height: 31px; margin-top: 45px; border: 1px solid #959aa3; border-radius: 2px; background: linear-gradient(90deg, #f8f9fb, #d9dde4); }
.vthumb i { width: 8px; height: 1px; background: #6d7178; }

.sheetbar { display: flex; flex: none; align-items: center; height: 17px; background: #dfe3e9; border-top: 1px solid #c3c8d0; border-bottom: 1px solid #9298a3; padding-right: 2px; }
.nav { display: flex; gap: 7px; padding: 0 5px; width: 63px; height: 16px; align-items: center; border-right: 1px solid #a7acb5; }
.sheet { position: relative; flex: none; height: 15px; font-size: 12px; line-height: 15px; color: #4e535b; }
.sheet::before { content: ""; position: absolute; inset: 0 -7px 0 0; background: linear-gradient(#e9ecf0, #d9dde3); clip-path: polygon(8px 0, 100% 0, calc(100% - 9px) 100%, 0 100%); }
.sheet::after { content: ""; position: absolute; inset: 0 -8px 0 auto; width: 10px; background: linear-gradient(to bottom right, transparent 44%, #fff 45%, #fff 50%, #8d929b 51%, #8d929b 56%, transparent 57%); }
.sheet span { position: relative; z-index: 1; padding-left: 2px; white-space: nowrap; }
.sheet.first::before { clip-path: polygon(0 0, 100% 0, calc(100% - 9px) 100%, 0 100%); }
.navy { color: #fff; } .red { color: #fff; } .violet { color: #fff; }
.green, .yellow, .cyan { color: #111; }
.navy::before { background: linear-gradient(#1f497d, #3d6598); }
.green::before { background: linear-gradient(#0f0, #5dff4c); }
.yellow::before { background: linear-gradient(#ff0, #ffff5a); }
.red::before { background: linear-gradient(#c00000, #d63a34); }
.cyan::before { background: linear-gradient(#0ff, #6cffff); }
.violet::before { background: linear-gradient(#7030a0, #9a68bd); }
.current { width: 75px; font-weight: 700; }
.current::before { background: #fff; clip-path: polygon(0 0, 100% 0, calc(100% - 9px) 100%, 0 100%); }
.add { width: 38px; } .add span { display: flex; justify-content: center; }
.gap { width: 24px; }
.split { width: 7px; height: 14px; border: 1px solid #868b94; background: #f5f6f8; }
.left { margin: 0 9px 0 6px; }
.hthumb { display: flex; align-items: center; justify-content: center; gap: 1px; width: 16px; height: 15px; border: 1px solid #959aa3; border-radius: 2px; background: linear-gradient(#f8f9fb, #d9dde4); }
.hthumb i { width: 1px; height: 7px; background: #84888f; }
.corner { width: 20px; }

.status { display: flex; flex: none; align-items: center; height: 22px; background: linear-gradient(#e2e4e8, #cfd2d7 40%, #b9bcc2); border-bottom: 1px solid #53565e; padding: 0 4px 0 8px; }
.ready { width: 50px; border-right: 1px solid #8d9199; line-height: 16px; }
.views { display: flex; gap: 2px; border-left: 1px solid #8d9199; padding-left: 4px; }
.views button { display: flex; align-items: center; justify-content: center; width: 18px; height: 18px; }
.pct { width: 42px; text-align: center; }
.round { margin-left: 1px; }
.slider { appearance: none; width: 100px; height: 16px; margin: 0; background: linear-gradient(#8d9199, #8d9199) 50px 4px / 1px 8px no-repeat, linear-gradient(#8d9199, #8d9199) 0 8px / 100% 1px no-repeat; }
.slider::-webkit-slider-thumb { appearance: none; width: 9px; height: 12px; background: #eef0f2; border: 1px solid #6d7077; border-radius: 1px 1px 5px 5px; }

.taskbar { display: flex; flex: none; align-items: center; height: 39px; color: #fff; border-top: 1px solid #7c7f88; background: radial-gradient(ellipse 60px 24px at 1000px 10px, #17171b 40%, transparent), radial-gradient(ellipse 90px 16px at 1000px 34px, #131316 40%, transparent), radial-gradient(ellipse 90px 12px at 900px 30px, #17171b 30%, transparent), linear-gradient(90deg, #2b2c33, #484a57 60px, #4b4e5c 700px, #50535f 850px, #353a48 950px, #3f4350 1080px, #444653 1180px, #2e2f38); }
.orb { margin-left: 8px; }
.ff { margin-left: 27px; } .wmp { margin-left: 32px; } .exp { margin-left: 31px; }
.task { display: flex; align-items: center; gap: 6px; width: 158px; height: 37px; margin-left: 4px; padding-left: 6px; border: 1px solid #1f2028; border-radius: 3px; box-shadow: inset 0 0 0 1px #8f919b; background: linear-gradient(165deg, #8a8b94, #6b6d78 45%, #555763 46%, #5b5d69); white-space: nowrap; }
.task.active { margin-left: 15px; background: linear-gradient(165deg, #b5b6bd, #92949d 45%, #7d7f89 46%, #94969f); box-shadow: inset 0 0 0 1px #d4d5da; }
.tray { display: flex; align-items: center; gap: 10px; }
.clock { display: flex; flex-direction: column; width: 82px; margin-left: 4px; text-align: center; line-height: 17px; }
.desk { width: 14px; height: 37px; border: 1px solid #8b8d96; background: linear-gradient(135deg, #5d5f69, #2b2c34); }
</style>
